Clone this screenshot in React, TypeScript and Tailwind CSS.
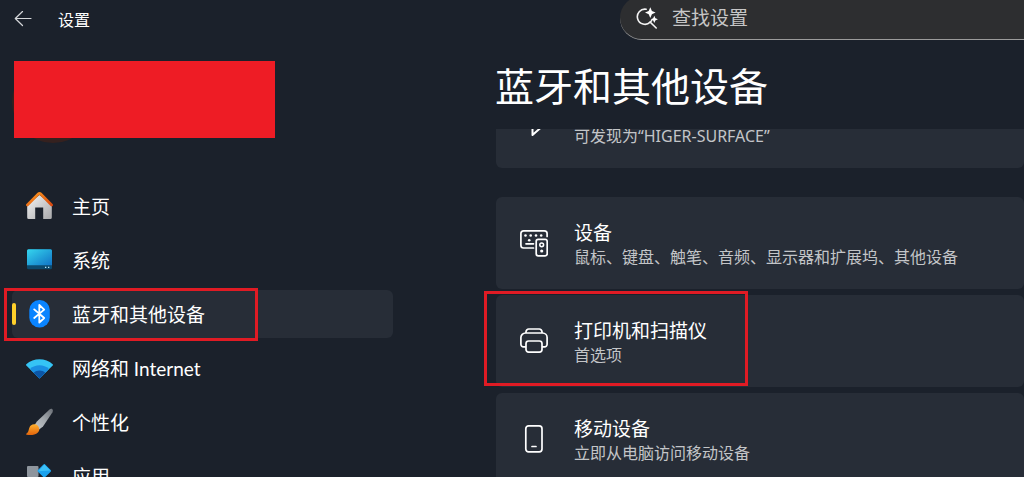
import React from 'react';
import { clsx } from 'clsx';

type NavItem = {
  label: string;
  icon: React.ReactNode;
  active?: boolean;
};

type DeviceItem = {
  title: string;
  description: string;
  icon: React.ReactNode;
  highlighted?: boolean;
};

function HomeIcon() {
  return (
    <svg viewBox="0 0 28 28" className="size-7" aria-hidden="true">
      <defs>
        <linearGradient id="home-wall" x1="0" y1="0" x2="1" y2="1">
          <stop offset="0" stopColor="#f4f4f4" />
          <stop offset="1" stopColor="#a9a9ab" />
        </linearGradient>
        <linearGradient id="home-roof" x1="0" y1="0" x2="1" y2="1">
          <stop offset="0" stopColor="#ff9a1f" />
          <stop offset="1" stopColor="#d9480f" />
        </linearGradient>
      </defs>
      <path d="M13.500 3 1.200 13V25.500a1.500 1.500 0 0 0 1.500 1.500H9.200V15.600h8v11.400h7.100a1.500 1.500 0 0 0 1.500-1.500V13Z" fill="url(#home-wall)" />
      <path d="M1.400 13 12.500 1.800a1.400 1.400 0 0 1 2 0L25.600 13" fill="none" stroke="url(#home-roof)" strokeWidth="2.700" strokeLinecap="round" strokeLinejoin="round" />
    </svg>
  );
}

function SystemIcon() {
  return (
    <svg viewBox="0 0 28 28" className="size-7" aria-hidden="true">
      <defs>
        <linearGradient id="screen" x1="0" y1="0" x2="1" y2="1">
          <stop offset="0" stopColor="#35d6ee" />
          <stop offset="1" stopColor="#1173c6" />
        </linearGradient>
      </defs>
      <rect x="1" y="3.300" width="25" height="20" rx="1.500" fill="#0c4a6e" />
      <path d="M2.500 3.300h22A1.500 1.500 0 0 1 26 4.800V19.300H1V4.800A1.500 1.500 0 0 1 2.500 3.300Z" fill="url(#screen)" />
      <path d="M19 21.300h1.300M22 21.300h1.300" stroke="#b9e6f7" strokeWidth="1.200" />
    </svg>
  );
}

function BluetoothBadgeIcon() {
  return (
    <svg viewBox="0 0 28 28" className="size-7" aria-hidden="true">
      <rect x="3.300" y="0" width="20.500" height="27.500" rx="10" fill="#0a84ff" />
      <path d="m8.200 9.400 10 8.600-4.900 4.600V5l4.900 4.600-10 8.400" fill="none" stroke="#fff" strokeWidth="1.800" strokeLinejoin="round" strokeLinecap="round" />
    </svg>
  );
}

function NetworkIcon() {
  return (
    <svg viewBox="0 0 28 28" className="size-7" aria-hidden="true">
      <path d="M13.500 24.500 .3 11.500a.9.900 0 0 1 0-1.200C7.500 3.500 19.500 3.500 26.700 10.300a.9.900 0 0 1 0 1.200Z" fill="#35c4f5" />
      <path d="M13.500 24.500 4 15.100c5-5 14-5 19 0Z" fill="#1a8fe3" />
      <path d="M13.500 24.500 7.600 18.700c3.400-2.800 8.400-2.800 11.800 0Z" fill="#0c56a6" />
    </svg>
  );
}

function BrushIcon() {
  return (
    <svg viewBox="0 0 28 28" className="size-7" aria-hidden="true">
      <defs>
        <linearGradient id="handle" x1="1" y1="0" x2="0" y2="1">
          <stop offset="0" stopColor="#6b7077" />
          <stop offset=".5" stopColor="#a3a8ad" />
          <stop offset="1" stopColor="#c4c8cc" />
        </linearGradient>
        <linearGradient id="paint" x1="0" y1="0" x2="0" y2="1">
          <stop offset="0" stopColor="#ffb02e" />
          <stop offset="1" stopColor="#e2640c" />
        </linearGradient>
      </defs>
      <path d="M26.300 1.200c.8.700.7 1.800.2 3L17 18.500l-4.200 3.300-4.500-4.300 2.600-4L23.500 1.500c1-.8 2.100-.9 2.800-.3Z" fill="url(#handle)" />
      <path d="M4.800 17.600c2.200-1.900 5.200-1.600 7 .1 1.800 1.900 2 4.900.1 6.800-2.800 2.800-8 2.900-11.300 2.200-.7-.2-.6-.9 0-1.200 2.600-1.200 1.800-5.900 4.200-7.900Z" fill="url(#paint)" />
    </svg>
  );
}

function AppsIcon() {
  return (
    <svg viewBox="0 0 28 28" className="size-7" aria-hidden="true">
      <rect x="1" y="4" width="11.500" height="11" rx="1" fill="#8e959d" />
      <rect x="1" y="15" width="11.500" height="11" rx="1" fill="#5d646d" />
      <rect x="12.500" y="15" width="11.500" height="11" rx="1" fill="#7b828a" />
      <rect x="13.200" y="3.700" width="10.200" height="10.200" rx="1.200" transform="rotate(45 18.300 8.800)" fill="#1ba2ee" />
      <path d="m18.300 2.400 6 6-12 .800Z" fill="#3cc0f7" />
    </svg>
  );
}

function BluetoothIcon() {
  return (
    <svg viewBox="0 0 28 28" className="size-7 shrink-0" fill="none" stroke="#fff" strokeWidth="2" strokeLinejoin="round" strokeLinecap="round" aria-hidden="true">
      <path d="m5.500 8 15.500 11.500-8.500 7.500V1l8.500 7.500-15.500 10.500" />
    </svg>
  );
}

function DevicesIcon() {
  return (
    <svg viewBox="0 0 28 28" className="size-7 shrink-0" fill="none" stroke="#fff" strokeWidth="1.700" strokeLinecap="round" aria-hidden="true">
      <path d="M13.500 19H3.600A2.800 2.800 0 0 1 .9 16.200V4.600A2.800 2.800 0 0 1 3.700 1.800H24.300A2.800 2.800 0 0 1 27.100 4.600V7.500" />
      <path d="M6 14.800h7.500" />
      <g fill="#fff" stroke="none">
        <circle cx="5.500" cy="6.500" r="1.300" />
        <circle cx="10.700" cy="6.500" r="1.300" />
        <circle cx="16" cy="6.500" r="1.300" />
        <circle cx="21.200" cy="6.500" r="1.300" />
        <circle cx="9.200" cy="11.300" r="1.300" />
        <circle cx="21.700" cy="22" r="1.600" />
      </g>
      <rect x="16.200" y="10.400" width="11" height="16.400" rx="2" />
      <circle cx="21.700" cy="15.800" r="1.900" strokeWidth="1.500" />
    </svg>
  );
}

function PrinterIcon() {
  return (
    <svg viewBox="0 0 28 28" className="size-7 shrink-0" fill="none" stroke="#fff" strokeWidth="1.700" strokeLinejoin="round" aria-hidden="true">
      <path d="M6 6V4.800A2.800 2.800 0 0 1 8.800 2H19.200A2.800 2.800 0 0 1 22 4.800V6" />
      <path d="M6 19.800H3.500A2.600 2.600 0 0 1 .9 17.200V10.600A4.600 4.600 0 0 1 5.500 6H22.500A4.600 4.600 0 0 1 27.100 10.600V17.200A2.600 2.600 0 0 1 24.500 19.800H22" />
      <rect x="6" y="14" width="16" height="11.200" rx="2.600" />
    </svg>
  );
}

function PhoneIcon() {
  return (
    <svg viewBox="0 0 28 28" className="size-7 shrink-0" fill="none" stroke="#fff" strokeWidth="1.700" strokeLinecap="round" aria-hidden="true">
      <rect x="5.800" y=".9" width="16.200" height="26" rx="2.800" />
      <path d="M12 21.500h4" />
    </svg>
  );
}

function SearchIcon() {
  return (
    <svg viewBox="0 0 24 24" className="size-6 shrink-0" fill="none" stroke="#f2f2f2" strokeWidth="1.600" strokeLinecap="round" aria-hidden="true">
      <path d="M10.200 3.200A7.600 7.600 0 1 0 14.200 16.200L20.200 22" />
      <path d="M14.200 16.200a7.600 7.600 0 0 0 1.500-1.900" />
      <path d="M14.300 1.300 15.900 5 19.600 6.600 15.900 8.200 14.300 11.900 12.700 8.200 9 6.600 12.700 5Z" fill="#fff" stroke="none" />
      <path d="M18.300 9.700 19.400 12.200 21.900 13.300 19.400 14.400 18.300 16.900 17.200 14.400 14.700 13.300 17.200 12.200Z" fill="#fff" stroke="none" />
    </svg>
  );
}

const navItems: NavItem[] = [
  { label: '主页', icon: <HomeIcon /> },
  { label: '系统', icon: <SystemIcon /> },
  { label: '蓝牙和其他设备', icon: <BluetoothBadgeIcon />, active: true },
  { label: '网络和 Internet', icon: <NetworkIcon /> },
  { label: '个性化', icon: <BrushIcon /> },
  { label: '应用', icon: <AppsIcon /> },
];

const deviceItems: DeviceItem[] = [
  { title: '设备', description: '鼠标、键盘、触笔、音频、显示器和扩展坞、其他设备', icon: <DevicesIcon /> },
  { title: '打印机和扫描仪', description: '首选项', icon: <PrinterIcon />, highlighted: true },
  { title: '移动设备', description: '立即从电脑访问移动设备', icon: <PhoneIcon /> },
];

function DeviceCard({ item }: { item: DeviceItem }) {
  return (
    <li className="relative shrink-0">
      <button type="button" className="flex w-full items-center gap-[26px] rounded-md bg-[#272d37] px-6 py-5 text-left">
        {item.icon}
        <span className="flex flex-col pt-1 whitespace-nowrap">
          <span className="text-[19px] leading-6 text-white">{item.title}</span>
          <span className="text-base leading-6 text-[#c3c5c8]">{item.description}</span>
        </span>
      </button>
      {/* 红色标注框 */}
      {item.highlighted && (
        <div className="pointer-events-none absolute -top-1 -left-3 h-[95px] w-[264px] border-[3px] border-[#e01b24]" />
      )}
    </li>
  );
}

export default function App() {
  return (
    <div className="flex h-screen flex-col overflow-hidden bg-[#1b212b] font-['Noto_Sans','Noto_Sans_CJK_SC',sans-serif] text-white">
      {/* 标题栏 */}
      <header className="flex h-10 shrink-0 items-end">
        <div className="flex h-10 w-[620px] shrink-0 items-center gap-[26px] pl-[14px]">
          <button type="button" aria-label="返回">
            <svg viewBox="0 0 18 18" className="size-[18px]" fill="none" stroke="#d5d7da" strokeWidth="1.200" strokeLinecap="round" strokeLinejoin="round" aria-hidden="true">
              <path d="M8.500 .5 1.300 7.500 8.500 14.500M1.300 7.500H17" />
            </svg>
          </button>
          <span className="text-base">设置</span>
        </div>
        <label className="flex h-11 flex-1 items-center gap-3 rounded-l-full border-b border-[#9b9b9b] bg-[#2d2e30] pl-4">
          <SearchIcon />
          <input
            type="search"
            aria-label="查找设置"
            placeholder="查找设置"
            className="min-w-0 flex-1 bg-transparent pt-0.5 text-[19px] outline-none placeholder:text-[#c6c6c6]"
          />
        </label>
      </header>

      <div className="flex min-h-0 flex-1">
        {/* 侧边栏 */}
        <aside className="w-[405px] shrink-0 overflow-hidden px-3 pt-[21px]">
          <div className="relative ml-0.5 h-[77px] w-[261px]">
            <div className="absolute bottom-[-5px] -left-0.5 size-[82px] rounded-full bg-[#35211f]" />
            <div className="relative h-full bg-[#ee1c25]" />
          </div>
          <nav className="mt-11">
            <ul className="flex flex-col gap-1.5">
              {navItems.map((item) => (
                <li key={item.label} className="relative">
                  <a
                    href="#"
                    aria-current={item.active ? 'page' : undefined}
                    className={clsx(
                      "flex h-12 items-center gap-[18px] rounded-md pl-[14px] font-['Lato','Noto_Sans_CJK_SC',sans-serif] text-[19px]",
                      item.active && 'bg-[#272d37]'
                    )}
                  >
                    {item.icon}
                    <span className="pt-0.5">{item.label}</span>
                  </a>
                  {item.active && (
                    <>
                      <span className="absolute top-[13px] left-0 h-[22px] w-1 rounded-full bg-[#ffd02b]" />
                      <div className="pointer-events-none absolute -top-0.5 -left-2 h-[53px] w-[254px] border-[3px] border-[#e01b24]" />
                    </>
                  )}
                </li>
              ))}
            </ul>
          </nav>
        </aside>

        {/* 内容区 */}
        <main className="flex min-w-0 flex-1 flex-col">
          <h1 className="shrink-0 pt-[18px] pb-[15px] pl-[90px] text-[39px] leading-[56px] whitespace-nowrap">蓝牙和其他设备</h1>
          <div className="min-h-0 flex-1 overflow-hidden pl-[91px]">
            {/* 已滚动到一半的蓝牙卡片 */}
            <div className="mb-[29px] flex h-[39px] items-end gap-[26px] overflow-hidden rounded-b-md bg-[#272d37] pr-6 pl-6">
              <div className="pb-8">
                <BluetoothIcon />
              </div>
              <p className="pb-5 text-base leading-6 whitespace-nowrap text-[#c3c5c8]">可发现为“HIGER-SURFACE”</p>
            </div>
            <ul className="flex flex-col gap-1.5">
              {deviceItems.map((item) => (
                <DeviceCard key={item.title} item={item} />
              ))}
            </ul>
          </div>
        </main>
      </div>
    </div>
  );
}
